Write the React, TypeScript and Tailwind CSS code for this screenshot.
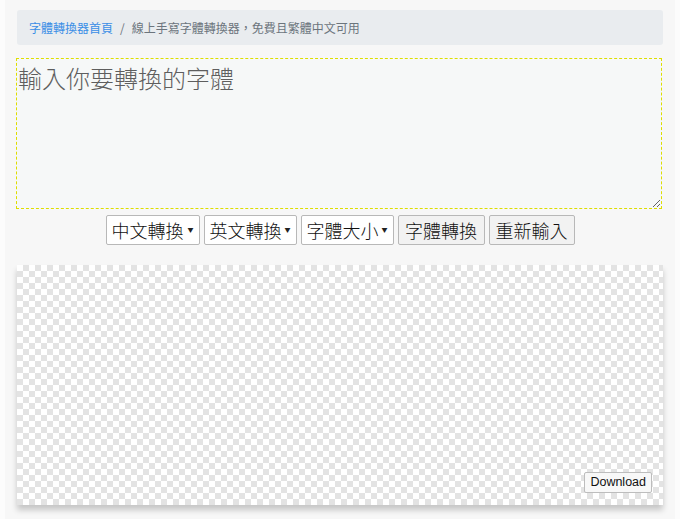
const cjk = "font-['Noto_Sans_CJK_TC','Noto_Sans_CJK_SC',sans-serif]";

const Dropdown = ({ label, w }: { label: string; w: string }) => (
  <button
    className={`${w} h-[30px] flex items-center justify-between pl-[5px] pr-[5px] bg-white border border-[#b8b8b8] rounded-[2px] text-[18px] font-light leading-none text-[#111]`}
  >
    <span>{label}</span>
    <span className="text-[6px] text-[#222]">▼</span>
  </button>
);

const PlainButton = ({ label, w }: { label: string; w: string }) => (
  <button
    className={`${w} h-[30px] flex items-center justify-center bg-[#f2f2f2] border border-[#b8b8b8] rounded-[2px] text-[18px] font-light leading-none text-[#111]`}
  >
    {label}
  </button>
);

export default function App() {
  return (
    <div className={`min-h-[519px] bg-[#fcfcfc] px-[5px] ${cjk}`}>
      <div className="bg-[#f7f7f7] min-h-[519px] px-[11px] pt-[10px]">
        <nav className="h-[35px] bg-[#e9ecef] rounded-[3px] flex items-center px-[12px] mx-[1px] text-[12px]">
          <a className="text-[#3a8ee6]">字體轉換器首頁</a>
          <span className="text-[#6c757d] px-[7px]">/</span>
          <span className="text-[#6c757d]">線上手寫字體轉換器，免費且繁體中文可用</span>
        </nav>

        <textarea
          className="mt-[13px] block w-[646px] h-[151px] bg-[#f6f8f8] border border-dashed border-[#dede00] px-[1px] py-[4px] text-[24px] font-light leading-[30px] placeholder:text-[#5e5e5e] outline-none"
          placeholder="輸入你要轉換的字體"
        />

        <div className="mt-[6px] flex justify-center gap-[4px]">
          <Dropdown label="中文轉換" w="w-[94px]" />
          <Dropdown label="英文轉換" w="w-[93px]" />
          <Dropdown label="字體大小" w="w-[93px]" />
          <PlainButton label="字體轉換" w="w-[87px]" />
          <PlainButton label="重新輸入" w="w-[86px]" />
        </div>

        <div className="mt-[20px] mx-[1px] h-[240px] relative bg-white bg-[conic-gradient(#e3e3e3_25%,#ffffff_0_50%,#e3e3e3_0_75%,#ffffff_0)] bg-[length:12px_12px] shadow-[0_5px_6px_rgba(0,0,0,0.2)]">
          <button className="absolute right-[11px] bottom-[12px] h-[21px] px-[5px] bg-[#f8f8f8] border border-[#bdbdbd] rounded-[2px] text-[12.5px] font-['Liberation_Sans',Arial,sans-serif] text-[#111] leading-none">
            Download
          </button>
        </div>
      </div>
    </div>
  );
}
